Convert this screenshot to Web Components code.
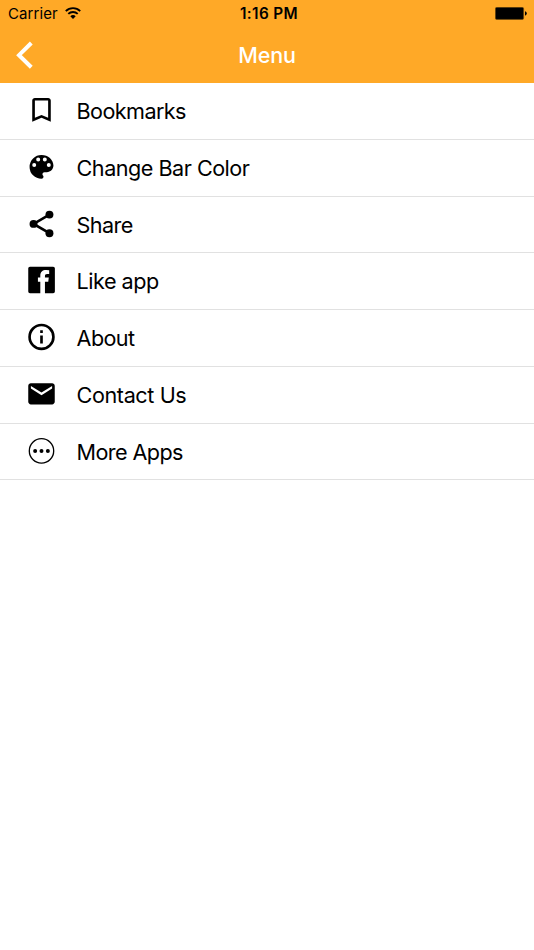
<!DOCTYPE html>
<html lang="en"><head><meta charset="utf-8"><title>Menu</title>
<style>html,body{margin:0;height:100%;background:#fff}body{font-family:Inter,"Liberation Sans",sans-serif;color:#000}</style></head>
<body>
<app-screen>
<status-bar slot="top" carrier="Carrier" time="1:16 PM"></status-bar>
<nav-bar slot="top">Menu</nav-bar>
<menu-row icon="bookmark" style="--ls:-.6px">Bookmarks</menu-row>
<menu-row icon="palette" style="--ls:-.5px">Change Bar Color</menu-row>
<menu-row icon="share" style="--ls:-.6px">Share</menu-row>
<menu-row icon="facebook" style="--ls:-.5px">Like app</menu-row>
<menu-row icon="info" style="--ls:-.6px">About</menu-row>
<menu-row icon="mail" style="--ls:-.4px">Contact Us</menu-row>
<menu-row icon="more" style="--ls:-.6px">More Apps</menu-row>
</app-screen>
<script>
const define=(name,html,setup)=>customElements.define(name,class extends HTMLElement{
 constructor(){super();this.attachShadow({mode:'open'})}
 connectedCallback(){this.shadowRoot.innerHTML=html;if(setup)setup(this,this.shadowRoot)}
});
define('app-screen',`<style>:host{display:flex;flex-direction:column;height:100vh;overflow:hidden;background:#fff}
header{background:#ffa927;height:83px;flex:none;display:flex;flex-direction:column}main{display:flex;flex-direction:column}</style>
<header><slot name="top"></slot></header><main><slot></slot></main>`);
define('status-bar',`<style>:host{display:grid;grid-template-columns:1fr auto 1fr;align-items:center;height:28px;font-size:15px;line-height:28px}
.l{display:flex;align-items:center;padding-left:8px;gap:7px}.c{letter-spacing:.1px}.t{font-size:15.3px;font-weight:600;letter-spacing:.4px;padding-left:4px}
svg{display:block}.b{justify-self:end;padding-right:7px;margin-top:-1px}.w{margin-top:-2px}</style>
<div class="l"><span class="c"></span><svg class="w" width="16" height="12" viewBox="0 0 16 12"><g fill="none" stroke="#000" stroke-width="1.9"><path d="M.8 4.1a10.3 10.3 0 0 1 14.4 0M3.3 6.9a6.7 6.7 0 0 1 9.4 0"/></g><path d="M5.3 9.2a3.9 3.9 0 0 1 5.4 0L8 11.9z"/></svg></div>
<span class="t"></span>
<svg class="b" width="32" height="13" viewBox="0 0 32 13"><rect x=".35" y=".35" width="28.3" height="12.1" rx="1.5" fill="#000" stroke="#6b4710" stroke-width=".7"/><path d="M30 4.3q1.8.6 1.8 2.2T30 8.7z"/></svg>`,
(e,r)=>{r.querySelector('.c').textContent=e.getAttribute('carrier');r.querySelector('.t').textContent=e.getAttribute('time')});
define('nav-bar',`<style>:host{display:grid;grid-template-columns:60px 1fr 60px;align-items:center;height:53px;color:#fff}
svg{display:block;margin-left:16px}span{text-align:center;font-size:21.5px;font-weight:500;letter-spacing:-.1px;line-height:53px;padding-top:1px}</style>
<svg width="18" height="28" viewBox="0 0 18 28"><path d="M15.3 2 3 14.2 15.3 26.3" fill="none" stroke="#fff" stroke-width="4"/></svg><span><slot></slot></span>`);
const icons={
bookmark:'<path d="M17 3H7c-1.1 0-2 .9-2 2v16l7-3 7 3V5c0-1.100-.9-2-2-2zm0 15-5-2.180L7 18V5h10v13z"/>',
palette:'<path d="M12 3a9 9 0 0 0 0 18c.83 0 1.500-.67 1.500-1.500 0-.39-.15-.74-.39-1.010-.23-.26-.38-.61-.38-.99 0-.83.67-1.500 1.500-1.500H16c2.760 0 5-2.240 5-5 0-4.420-4.030-8-9-8zm-5.500 9a1.500 1.500 0 1 1 0-3 1.500 1.500 0 0 1 0 3zm3-4a1.500 1.500 0 1 1 0-3 1.500 1.500 0 0 1 0 3zm5 0a1.500 1.500 0 1 1 0-3 1.500 1.500 0 0 1 0 3zm3 4a1.500 1.500 0 1 1 0-3 1.500 1.500 0 0 1 0 3z"/>',
share:'<path d="M18 5 6 12l12 7" fill="none" stroke="#000" stroke-width="2"/><circle cx="18" cy="5" r="3"/><circle cx="6" cy="12" r="3"/><circle cx="18" cy="19" r="3"/>',
facebook:'<path d="M3.300 2h17.500q1.300 0 1.300 1.300v17.500q0 1.300-1.300 1.300H14.600v-8.700h2.500l.4-3.300h-2.900V9.200c0-1.100.4-1.600 1.600-1.600h1.600V4.700l-2.300-.1c-2.800 0-4.400 1.500-4.400 4.300v1.200H9.300v3.300h1.800v8.700H3.300Q2 22.100 2 20.800V3.300Q2 2 3.300 2z"/>',
info:'<circle cx="12" cy="12" r="9" fill="none" stroke="#000" stroke-width="2"/><path d="M11 7h2v2h-2zm0 4h2v6h-2z"/>',
mail:'<path d="M20 4H4c-1.100 0-2 .9-2 2v12c0 1.100.9 2 2 2h16c1.100 0 2-.9 2-2V6c0-1.100-.9-2-2-2zm0 4-8 5-8-5V6l8 5 8-5v2z"/>',
more:'<circle cx="12" cy="12" r="9.200" fill="none" stroke="#000" stroke-width="1"/><circle cx="7.200" cy="12" r="1.500"/><circle cx="12" cy="12" r="1.500"/><circle cx="16.800" cy="12" r="1.500"/>'};
define('menu-row',`<style>:host{display:flex;align-items:center;box-sizing:border-box;height:56.77px;border-bottom:1px solid #e1e1e1;padding-left:25.5px;font-size:21.6px;line-height:28px;letter-spacing:var(--ls,0)}
svg{width:31.8px;height:31.8px;margin:-1.6px 19.3px 0 0;flex:none}span{white-space:nowrap;padding-top:.2px}</style><svg viewBox=".3 0 24 24"></svg><span><slot></slot></span>`,
(e,r)=>{r.querySelector('svg').innerHTML=icons[e.getAttribute('icon')]});
</script></body></html>
